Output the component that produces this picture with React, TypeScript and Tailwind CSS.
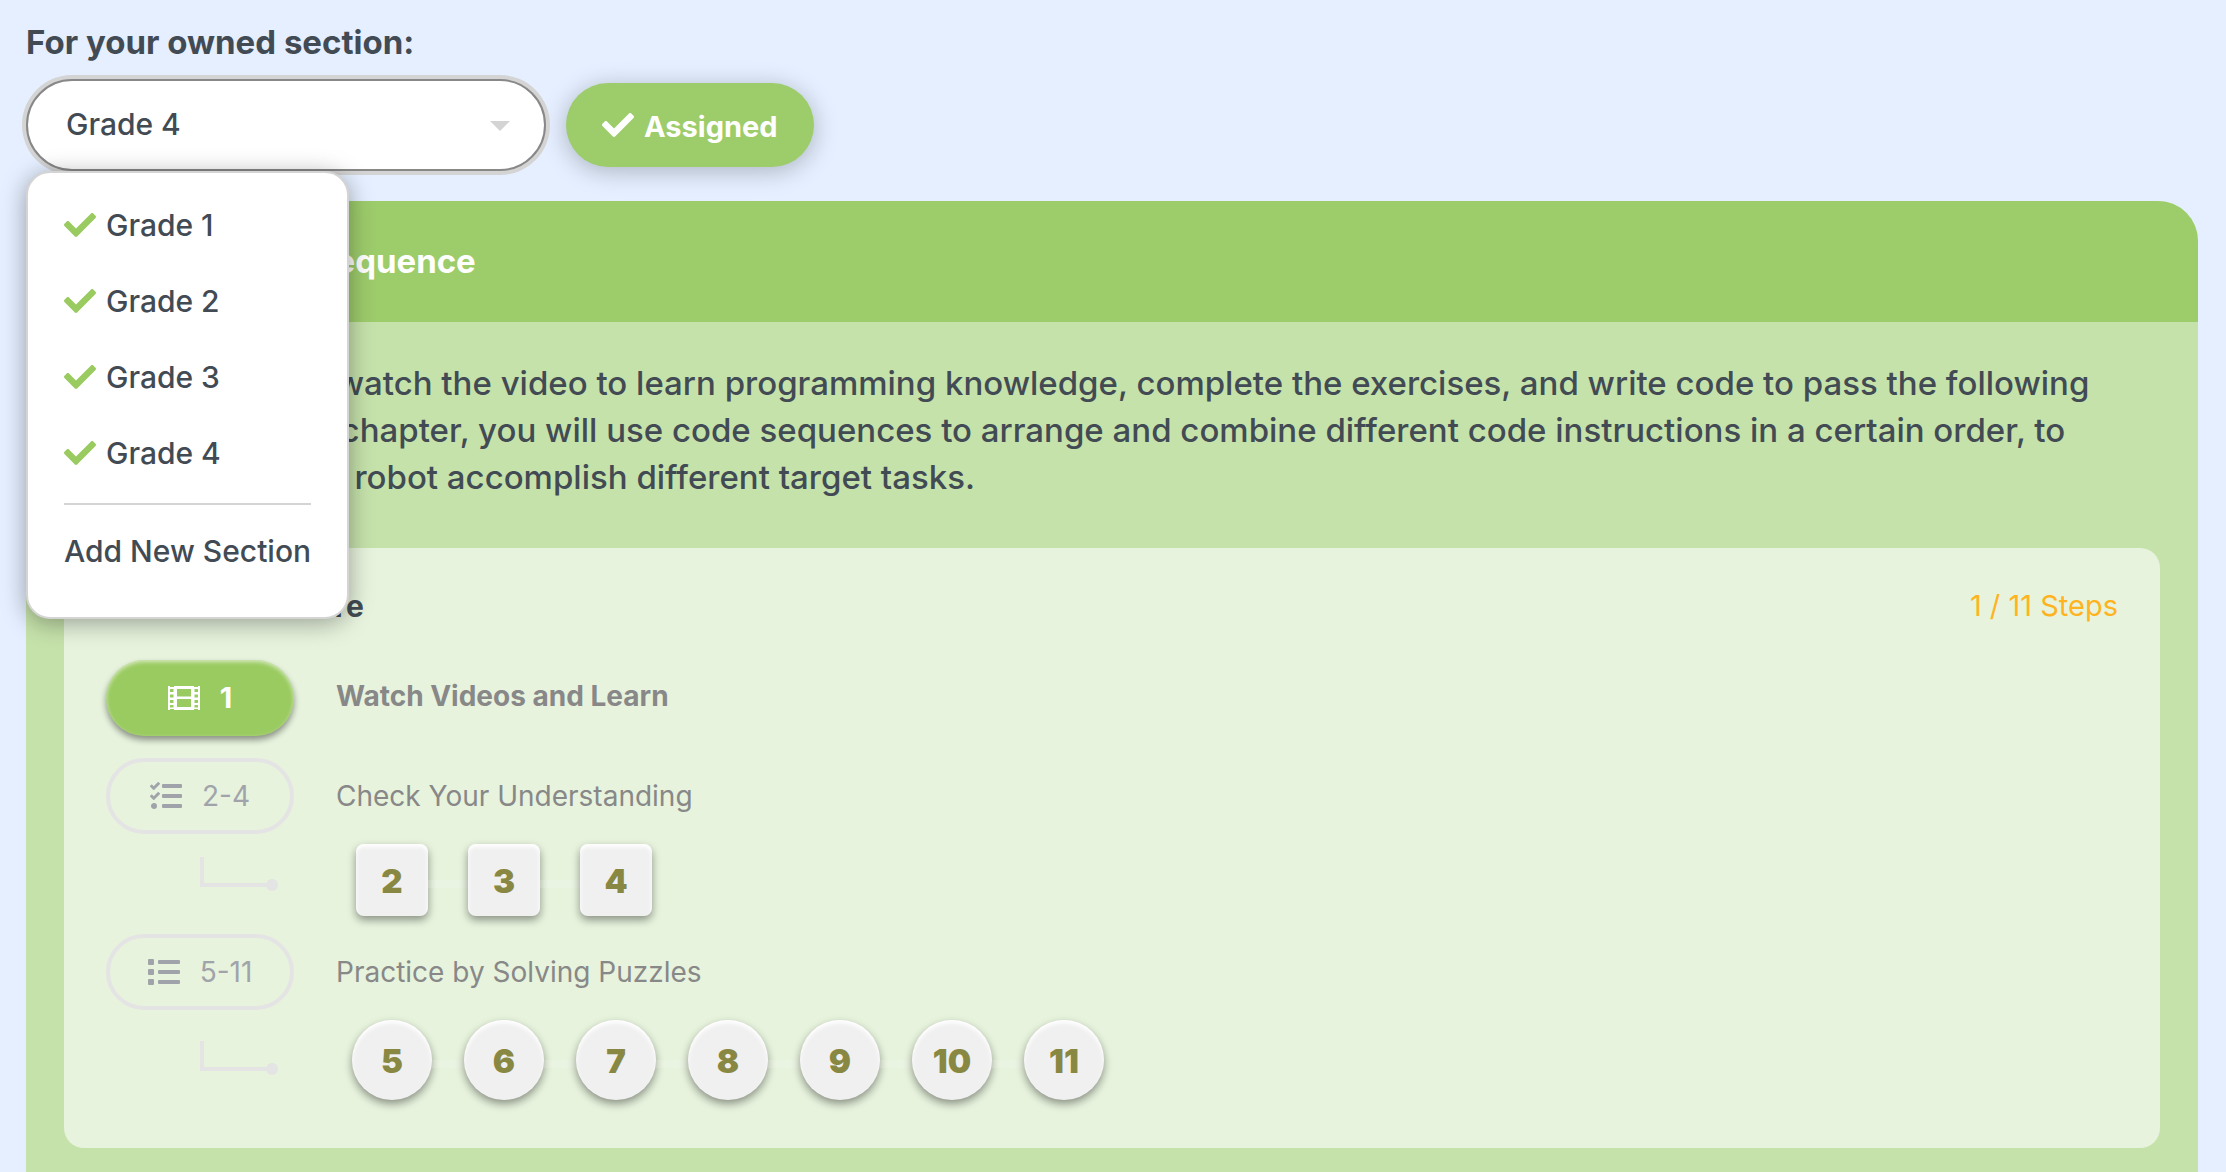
import { useState } from "react";
import type { ReactNode } from "react";
import { FaCheck, FaList, FaTasks } from "react-icons/fa";

const sections = ["Grade 1", "Grade 2", "Grade 3", "Grade 4"];

function FilmIcon() {
  return (
    <svg viewBox="0 0 32 24" className="w-8 h-6" fill="currentColor" fillRule="evenodd" aria-hidden="true">
      <path d="M0 0H2V1H6V0H26V1H30V0H32V24H30V23H26V24H6V23H2V24H0ZM9 3V10.500H23V3ZM9 13V21H23V13ZM2 3V6H5.500V3ZM2 8.500V11.500H5.500V8.500ZM2 14V17H5.500V14ZM2 19V21.500H5.500V19ZM26.500 3V6H30V3ZM26.500 8.500V11.500H30V8.500ZM26.500 14V17H30V14ZM26.500 19V21.500H30V19Z" />
    </svg>
  );
}

function Connector() {
  return (
    <svg viewBox="0 0 84 36" className="w-[84px] h-9 ml-[94px] text-[#e4e4e4]" aria-hidden="true">
      <path d="M2 0V28H72" fill="none" stroke="currentColor" strokeWidth="4" />
      <circle cx="72" cy="28" r="6" fill="currentColor" />
    </svg>
  );
}

function StepPill({ icon, range, active = false }: { icon: ReactNode; range: string; active?: boolean }) {
  return (
    <button
      className={
        active
          ? "flex items-center justify-center gap-5 w-[188px] h-[76px] rounded-full bg-[#9acb60] text-white text-[29px] font-bold shadow-[0_4px_6px_rgba(0,0,0,0.4),inset_0_2px_4px_rgba(255,255,255,0.6)]"
          : "flex items-center justify-center gap-5 w-[188px] h-[76px] rounded-full border-4 border-[#e4e4e4] text-[#a0a4aa] text-[28px]"
      }
    >
      {icon}
      {range}
    </button>
  );
}

function StepButtons({ from, to, round = false }: { from: number; to: number; round?: boolean }) {
  const steps = Array.from({ length: to - from + 1 }, (_, i) => from + i);
  return (
    <div className={round ? "flex items-center ml-4" : "flex items-center ml-5"}>
      {steps.map((n) => (
        <div key={n} className="flex items-center">
          {n > from && (
            <div className={round ? "w-8 h-4 border-b-8 border-white/15" : "w-10 h-4 border-b-8 border-white/15"} />
          )}
          <button
            className={
              (round ? "size-20 rounded-full" : "size-[72px] rounded-lg") +
              " pt-1 bg-[#f0f0f0] text-[#888843] text-[33px] font-black shadow-[0_4px_8px_rgba(0,0,0,0.4),inset_0_3px_4px_#fff]"
            }
          >
            {n}
          </button>
        </div>
      ))}
    </div>
  );
}

export default function App() {
  const [section, setSection] = useState("Grade 4");

  return (
    <main className="min-h-screen flex flex-col bg-[#e5efff] pl-[26px] pr-7 pt-[22px] font-['Inter',sans-serif] text-[#424b54]">
      <label htmlFor="section" className="text-[33px] leading-10 font-bold">
        For your owned section:
      </label>

      <div className="relative z-10 flex items-center gap-5 mt-[17px]">
        <div className="relative">
          <select
            id="section"
            value={section}
            onChange={(e) => setSection(e.target.value)}
            className="appearance-none w-[520px] h-[92px] pl-[38px] pb-0.5 rounded-full bg-white border-2 border-[#888888] ring-4 ring-[#d4d4d4] text-[30px] font-medium outline-none"
          >
            {sections.map((s) => (
              <option key={s}>{s}</option>
            ))}
          </select>
          <svg viewBox="0 0 20 10" className="absolute right-9 top-[42px] w-5 h-2.5 text-[#d4d4d4] pointer-events-none" fill="currentColor" aria-hidden="true">
            <path d="M0 0H20L10 10Z" />
          </svg>
        </div>

        <button className="flex items-center gap-2.5 h-[84px] px-9 rounded-full bg-[#9dcc6b] text-white text-[29px] font-bold shadow-[0_4px_24px_rgba(0,0,0,0.25)]">
          <FaCheck className="size-8" />
          <span className="pt-1">Assigned</span>
        </button>

        <div className="absolute left-0 top-full w-[323px] px-9 pt-3.5 pb-7 rounded-3xl bg-white border-2 border-[#d4d4d4] text-[30px] font-medium shadow-[0_4px_24px_rgba(0,0,0,0.35)]">
          {sections.map((s) => (
            <button key={s} onClick={() => setSection(s)} className="flex items-center gap-2.5 w-full h-[76px]">
              <FaCheck className="size-8 text-[#9acb60]" />
              {s}
            </button>
          ))}
          <hr className="mt-3 mb-2 border-t-2 border-[#d4d4d4]" />
          <button className="flex items-center h-[76px] whitespace-nowrap">Add New Section</button>
        </div>
      </div>

      <section className="flex-1 mt-[30px] rounded-t-[40px] overflow-hidden bg-[#c6e2ab]">
        <h2 className="flex items-center h-[121px] px-[38px] bg-[#9dcc6b] text-white text-[33px] font-bold">
          Lesson 1: Code Sequence
        </h2>

        <div className="px-[38px] pt-[38px]">
          <p className="text-[33px] leading-[47px] font-medium">
            In every chapter, watch the video to learn programming knowledge, complete the exercises, and write code to pass the following
            <br />
            questions. In this chapter, you will use code sequences to arrange and combine different code instructions in a certain order, to
            <br />
            make your coding robot accomplish different target tasks.
          </p>

          <div className="mt-[47px] px-[42px] pt-[38px] pb-12 rounded-[20px] bg-[#e7f3dd]">
            <div className="flex items-center justify-between leading-10">
              <h3 className="text-[30px] font-bold">2. Code Structure</h3>
              <span className="text-[29px] text-[#ffb31f]">1 / 11 Steps</span>
            </div>

            <div className="grid grid-cols-[188px_1fr] gap-x-[42px] items-center mt-[34px] text-[28px] text-[#888888]">
              <StepPill active icon={<FilmIcon />} range="1" />
              <p className="pb-1 font-bold">Watch Videos and Learn</p>

              <div className="mt-[22px]">
                <StepPill icon={<FaTasks className="size-8" />} range="2-4" />
              </div>
              <p className="mt-[22px]">Check Your Understanding</p>
              <Connector />
              <div className="mt-2.5">
                <StepButtons from={2} to={4} />
              </div>

              <div className="mt-[18px]">
                <StepPill icon={<FaList className="size-8" />} range="5-11" />
              </div>
              <p className="mt-[18px]">Practice by Solving Puzzles</p>
              <div className="pt-2">
                <Connector />
              </div>
              <div className="mt-2.5">
                <StepButtons from={5} to={11} round />
              </div>
            </div>
          </div>
        </div>
      </section>
    </main>
  );
}
